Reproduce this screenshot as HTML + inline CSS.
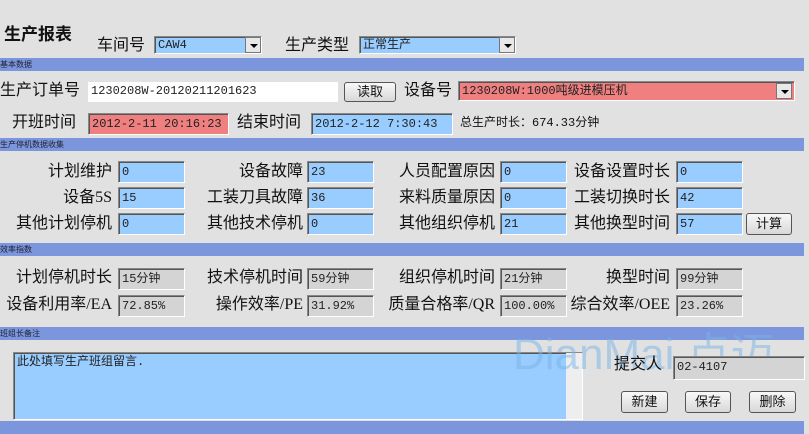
<!DOCTYPE html>
<html><head><meta charset="utf-8"><style>
*{margin:0;padding:0;box-sizing:border-box}
body{width:809px;height:425px;background:#e1e1e1;position:relative;overflow:hidden;font-family:"Liberation Serif","Noto Sans CJK SC",sans-serif}
div{position:absolute}
.bar{left:0;width:804px;height:13px;background:#7b96dc;font-size:8px;color:#223;line-height:13px;padding-left:0}
.l{font-size:16px;color:#111;white-space:nowrap;line-height:22px;text-align:right}
.i{height:22px;border:1px solid #888;border-right-color:#fff;border-bottom-color:#fff;box-shadow:inset 1px 1px 0 #555;font-family:"Liberation Mono","Noto Sans CJK SC",monospace;font-size:12px;line-height:20px;padding-left:3px;color:#222;white-space:nowrap;overflow:hidden}
.b{background:#99ccff}.r{background:#f08080}.g{background:#d4d4d4}.w{background:#fff}
.btn{height:22px;border:1px solid #555;border-radius:3px;background:linear-gradient(#f8f8f8,#d8d8d8);font-size:13px;text-align:center;line-height:20px;color:#111}
.dd{width:16px;height:16px;top:2px;right:2px;background:#e8e8e8;border:1px solid #777}
.dd:after{content:"";position:absolute;left:4px;top:6px;border:4px solid transparent;border-top:4px solid #000;border-bottom:0}
</style></head><body>
<div class="l" style="left:4px;top:24px;font-size:17px;font-weight:bold">生产报表</div>
<div class="l" style="left:97px;top:35px">车间号</div>
<div class="i b" style="left:154px;top:36px;width:108px;height:18px;line-height:16px">CAW4<div class="dd" style="top:0;right:0"></div></div>
<div class="l" style="left:285px;top:35px">生产类型</div>
<div class="i b" style="left:359px;top:36px;width:157px;height:18px;line-height:16px">正常生产<div class="dd" style="top:0;right:0"></div></div>
<div class="bar" style="top:58px">基本数据</div>
<div class="l" style="left:0;top:80px">生产订单号</div>
<div class="i w" style="left:88px;top:82px;width:250px;height:20px;line-height:18px;border:none;box-shadow:none">1230208W-20120211201623</div>
<div class="btn" style="left:344px;top:82px;width:52px;height:20px;line-height:18px">读取</div>
<div class="l" style="left:404px;top:80px">设备号</div>
<div class="i r" style="left:458px;top:81px;width:337px;height:20px;line-height:18px">1230208W:1000吨级进模压机<div class="dd" style="top:1px;right:2px"></div></div>
<div class="l" style="left:12px;top:112px">开班时间</div>
<div class="i r" style="left:88px;top:113px;width:141px">2012-2-11 20:16:23</div>
<div class="l" style="left:237px;top:112px">结束时间</div>
<div class="i b" style="left:311px;top:113px;width:142px">2012-2-12 7:30:43</div>
<div class="l" style="left:460px;top:112px;font-size:12px;font-family:'Liberation Mono','Noto Sans CJK SC',monospace">总生产时长：674.33分钟</div>
<div class="bar" style="top:138px">生产停机数据收集</div>

<div class="l" style="right:697px;top:161px">计划维护</div><div class="i b" style="left:118px;top:161px;width:67px">0</div>
<div class="l" style="right:506px;top:161px">设备故障</div><div class="i b" style="left:307px;top:161px;width:67px">23</div>
<div class="l" style="right:314px;top:161px">人员配置原因</div><div class="i b" style="left:500px;top:161px;width:67px">0</div>
<div class="l" style="right:139px;top:161px">设备设置时长</div><div class="i b" style="left:676px;top:161px;width:67px">0</div>

<div class="l" style="right:697px;top:187px">设备5S</div><div class="i b" style="left:118px;top:187px;width:67px">15</div>
<div class="l" style="right:506px;top:187px">工装刀具故障</div><div class="i b" style="left:307px;top:187px;width:67px">36</div>
<div class="l" style="right:314px;top:187px">来料质量原因</div><div class="i b" style="left:500px;top:187px;width:67px">0</div>
<div class="l" style="right:139px;top:187px">工装切换时长</div><div class="i b" style="left:676px;top:187px;width:67px">42</div>

<div class="l" style="right:697px;top:213px">其他计划停机</div><div class="i b" style="left:118px;top:213px;width:67px">0</div>
<div class="l" style="right:506px;top:213px">其他技术停机</div><div class="i b" style="left:307px;top:213px;width:67px">0</div>
<div class="l" style="right:314px;top:213px">其他组织停机</div><div class="i b" style="left:500px;top:213px;width:67px">21</div>
<div class="l" style="right:139px;top:213px">其他换型时间</div><div class="i b" style="left:676px;top:213px;width:67px">57</div>
<div class="btn" style="left:746px;top:213px;width:46px">计算</div>

<div class="bar" style="top:243px">效率指数</div>
<div class="l" style="right:697px;top:267px">计划停机时长</div><div class="i g" style="left:118px;top:268px;width:67px">15分钟</div>
<div class="l" style="right:506px;top:267px">技术停机时间</div><div class="i g" style="left:307px;top:268px;width:67px">59分钟</div>
<div class="l" style="right:314px;top:267px">组织停机时间</div><div class="i g" style="left:500px;top:268px;width:67px">21分钟</div>
<div class="l" style="right:139px;top:267px">换型时间</div><div class="i g" style="left:676px;top:268px;width:67px">99分钟</div>
<div class="l" style="right:697px;top:294px">设备利用率/EA</div><div class="i g" style="left:118px;top:295px;width:67px">72.85%</div>
<div class="l" style="right:506px;top:294px">操作效率/PE</div><div class="i g" style="left:307px;top:295px;width:67px">31.92%</div>
<div class="l" style="right:314px;top:294px">质量合格率/QR</div><div class="i g" style="left:500px;top:295px;width:67px">100.00%</div>
<div class="l" style="right:139px;top:294px">综合效率/OEE</div><div class="i g" style="left:676px;top:295px;width:67px">23.26%</div>

<div class="bar" style="top:327px">班组长备注</div>
<div class="i b" style="left:13px;top:352px;width:570px;height:68px;line-height:18px">此处填写生产班组留言.<div style="right:0;top:0;width:16px;height:66px;background:#eee"></div></div>
<div style="left:513px;top:318px;font-size:44px;color:rgba(120,180,230,0.5);font-family:'Liberation Sans','Noto Sans CJK SC',sans-serif;white-space:nowrap">DianMai 点迈</div>
<div class="l" style="left:614px;top:354px">提交人</div>
<div class="i g" style="left:673px;top:356px;width:132px;height:24px">02-4107</div>
<div class="btn" style="left:621px;top:391px;width:47px">新建</div>
<div class="btn" style="left:685px;top:391px;width:46px">保存</div>
<div class="btn" style="left:749px;top:391px;width:47px">删除</div>
<div class="bar" style="top:421px"></div>
</body></html>
